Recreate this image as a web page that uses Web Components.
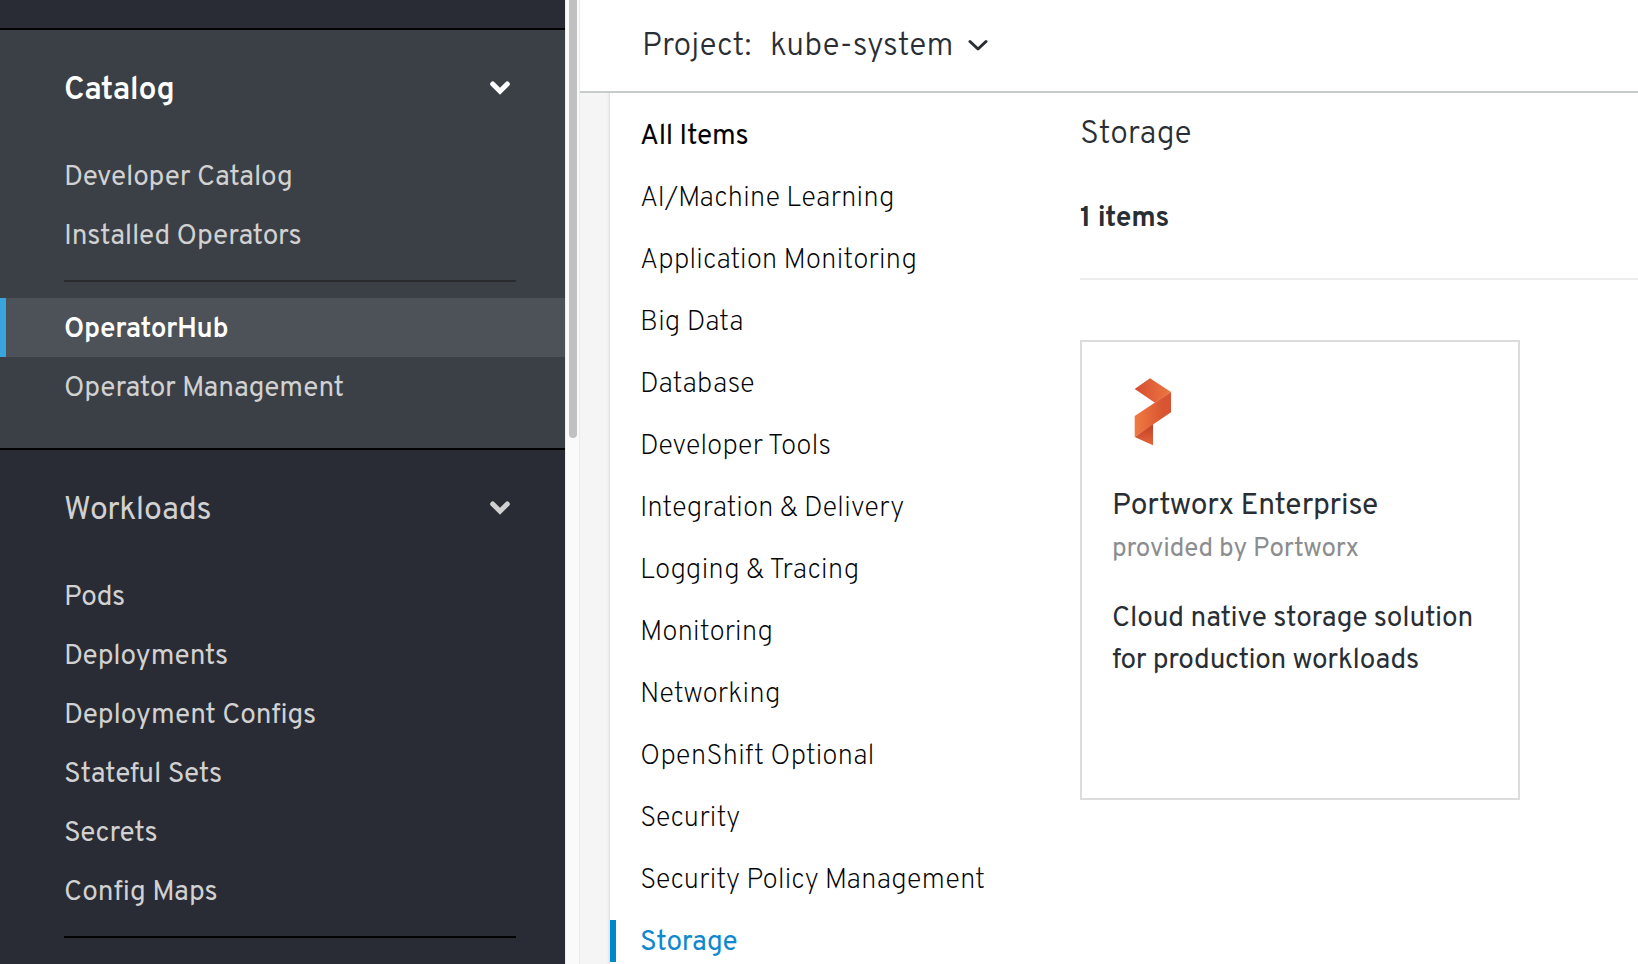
<!DOCTYPE html>
<html lang="en">
<head>
<meta charset="utf-8">
<title>OperatorHub</title>
<style>
html,body{margin:0;height:100%;overflow:hidden;background:#fff}
body{font-family:Overpass,Roboto,"Open Sans",sans-serif;font-size:28px;color:#292e34}
</style>
</head>
<body>
<console-page>
  <side-nav slot="nav">
    <nav-section active label="Catalog" w="107.5">
      <nav-item w="225">Developer Catalog</nav-item>
      <nav-item w="234.5">Installed Operators</nav-item>
      <nav-rule></nav-rule>
      <nav-item current w="162.5">OperatorHub</nav-item>
      <nav-item w="278.5">Operator Management</nav-item>
    </nav-section>
    <nav-section label="Workloads" w="145.5">
      <nav-item w="58">Pods</nav-item>
      <nav-item w="161">Deployments</nav-item>
      <nav-item w="249">Deployment Configs</nav-item>
      <nav-item w="156">Stateful Sets</nav-item>
      <nav-item w="91.5">Secrets</nav-item>
      <nav-item w="151.5">Config Maps</nav-item>
      <nav-rule></nav-rule>
    </nav-section>
  </side-nav>
  <project-bar slot="bar"></project-bar>
  <category-list slot="categories">
    <category-item all w="106.5">All Items</category-item>
    <category-item w="251">AI/Machine Learning</category-item>
    <category-item w="273.5">Application Monitoring</category-item>
    <category-item w="100">Big Data</category-item>
    <category-item w="112">Database</category-item>
    <category-item w="189.5">Developer Tools</category-item>
    <category-item w="262">Integration &amp; Delivery</category-item>
    <category-item w="216">Logging &amp; Tracing</category-item>
    <category-item w="128.5">Monitoring</category-item>
    <category-item w="136">Networking</category-item>
    <category-item w="230.5">OpenShift Optional</category-item>
    <category-item w="99">Security</category-item>
    <category-item w="343">Security Policy Management</category-item>
    <category-item current w="95.5">Storage</category-item>
  </category-list>
  <catalog-results slot="results">
    <operator-card></operator-card>
  </catalog-results>
</console-page>

<script>
function define(name, html, setup) {
  const t = document.createElement('template');
  t.innerHTML = html;
  customElements.define(name, class extends HTMLElement {
    connectedCallback() {
      if (this.shadowRoot) return;
      const root = this.attachShadow({ mode: 'open' });
      root.append(t.content.cloneNode(true));
      if (setup) setup(this, root);
    }
  });
}
const passWidth = (host, root) =>
  root.querySelector('fit-text').setAttribute('w', host.getAttribute('w'));

define('console-page', `
<style>
:host{display:grid;grid-template-columns:565px 15px 1fr;height:100vh;overflow:hidden}
.track{box-sizing:border-box;background:#fafafa;border-left:1px solid #ebebeb;border-right:1px solid #ebebeb;padding-left:3px;overflow:hidden}
.thumb{width:8px;height:438px;background:#c1c1c1;border-radius:0 0 4px 4px}
main{display:grid;grid-template-rows:93px 1fr;min-width:0;min-height:0}
.body{display:grid;grid-template-columns:30px 470px 1fr;min-height:0;overflow:hidden}
.gutter{background:linear-gradient(90deg,#f5f5f5 0 26px,#f1f1f1 28px,#dedede 30px)}
</style>
<slot name="nav"></slot>
<div class="track"><div class="thumb"></div></div>
<main><slot name="bar"></slot>
<div class="body"><div class="gutter"></div><slot name="categories"></slot><slot name="results"></slot></div></main>`);

define('side-nav', `
<style>:host{display:block;background:#292c34;color:#d1d1d1;overflow:hidden;padding-top:28px}</style><slot></slot>`);

define('nav-section', `
<style>
:host{display:block;border-top:2px solid #030303;padding-bottom:32px}
:host([active]){background:#3b3f46}
header{display:flex;align-items:center;justify-content:space-between;height:116px;padding:0 55px 0 64px;font-size:32px}
:host([active]) header{color:#fff;font-weight:600}
fit-text{padding-top:5.5px}
svg{display:block;width:20px;height:14px}
</style>
<header><fit-text></fit-text><svg viewBox="0 0 20 14"><path d="M2.700 2.900 10 10.200l7.300-7.300" fill="none" stroke="currentColor" stroke-width="5" stroke-linecap="round"/></svg></header>
<slot></slot>`, (host, root) => {
  passWidth(host, root);
  root.querySelector('fit-text').textContent = host.getAttribute('label');
});

define('nav-item', `
<style>
:host{display:flex;align-items:center;height:59px;box-sizing:border-box;padding-left:64px}
:host([current]){background:#4d5258;color:#fff;font-weight:600;border-left:6px solid #39a5dc;padding-left:58px}
</style><fit-text><slot></slot></fit-text>`, passWidth);

define('nav-rule', `<style>:host{display:block;height:2px;margin:16px 49px 16px 64px;background:#030303}
:host-context([active]){background:#292b2d}</style>`);

define('project-bar', `
<style>
:host{display:flex;align-items:center;box-sizing:border-box;border-bottom:2px solid #c8cbcb;background:#fff;padding:0 0 2px 62px;font-size:32px;font-weight:350}
.name{margin-left:18.5px}
svg{width:20px;height:13px;margin:1px 0 0 14px}
</style>
<fit-text w="105.500">Project:</fit-text><fit-text class="name" w="179.500">kube-system</fit-text>
<svg viewBox="0 0 20 13"><path d="m2 2.500 8 7.500 8-7.500" fill="none" stroke="currentColor" stroke-width="3" stroke-linecap="round" stroke-linejoin="round"/></svg>`);

define('category-list', `
<style>:host{display:flex;flex-direction:column;gap:20px;padding-top:21px;color:#030303;font-weight:200}</style><slot></slot>`);

define('category-item', `
<style>
:host{display:flex;align-items:center;flex:none;height:42px;box-sizing:border-box;border-left:6px solid transparent;padding-left:24px}
:host([all]){font-weight:400}
:host([current]){border-color:#0088ce;color:#0f88cf;font-weight:400}
</style><fit-text><slot></slot></fit-text>`, passWidth);

define('catalog-results', `
<style>
:host{display:block;padding-top:21px}
h1,p{margin:0;height:42px;line-height:42px}
h1{font-size:32px;font-weight:350}
p{margin-top:42px;padding-bottom:38px;border-bottom:2px solid #ededed;font-weight:700}
.grid{display:flex;padding-top:60px}
fit-text{padding:0}
</style>
<h1><fit-text w="108.500">Storage</fit-text></h1>
<p><fit-text w="88.500">1 items</fit-text></p>
<div class="grid"><slot></slot></div>`);

define('operator-card', `
<style>
:host{display:block;box-sizing:border-box;width:440px;height:460px;border:2px solid #dcdcdc;padding:36px 30px 0 30px;background:#fff;font-weight:400}
svg{display:block;width:38px;height:68px;margin-left:21.5px}
div{line-height:42px}
.name{margin-top:40px;font-size:30px}
.by{margin-top:1px;font-size:26px;color:#8b8d8f}
.desc{margin-top:27px}
fit-text{padding:0}
</style>
<svg viewBox="192 144 114 204">
<defs>
<linearGradient id="a"><stop stop-color="#d54d31"/><stop offset="1" stop-color="#ee7741"/></linearGradient>
<linearGradient id="b"><stop stop-color="#f17b43"/><stop offset=".75" stop-color="#d95632"/><stop offset="1" stop-color="#d75232"/></linearGradient>
<linearGradient id="c" x1="0" y1="0" x2="0" y2="1"><stop stop-color="#bd4028"/><stop offset="1" stop-color="#e56538"/></linearGradient>
</defs>
<path fill="url(#c)" d="m194 321 55-40v65z"/>
<path fill="url(#a)" d="m240 145 63 41-48 32-61-41z"/>
<path fill="url(#b)" d="M303 186v61l-109 74v-63z"/>
</svg>
<div class="name"><fit-text w="263">Portworx Enterprise</fit-text></div>
<div class="by"><fit-text w="244.500">provided by Portworx</fit-text></div>
<div class="desc"><fit-text w="358.500">Cloud native storage solution</fit-text><br><fit-text w="306">for production workloads</fit-text></div>`);

// Spreads its text over the width given in "w" by adjusting the tracking.
define('fit-text', `<style>:host{display:inline-block;padding-top:.15em;white-space:nowrap}</style><slot></slot>`, (host) => {
  let text = host.textContent;
  if (!text.trim()) text = host.getRootNode().host.textContent;
  text = text.trim();
  const cs = getComputedStyle(host);
  const ctx = document.createElement('canvas').getContext('2d');
  ctx.font = `${cs.fontWeight} ${cs.fontSize} ${cs.fontFamily}`;
  const m = ctx.measureText(text);
  const ink = m.actualBoundingBoxRight + m.actualBoundingBoxLeft;
  host.style.letterSpacing = ((+host.getAttribute('w') - ink) / (text.length - 1)).toFixed(3) + 'px';
});
</script>
</body>
</html>
